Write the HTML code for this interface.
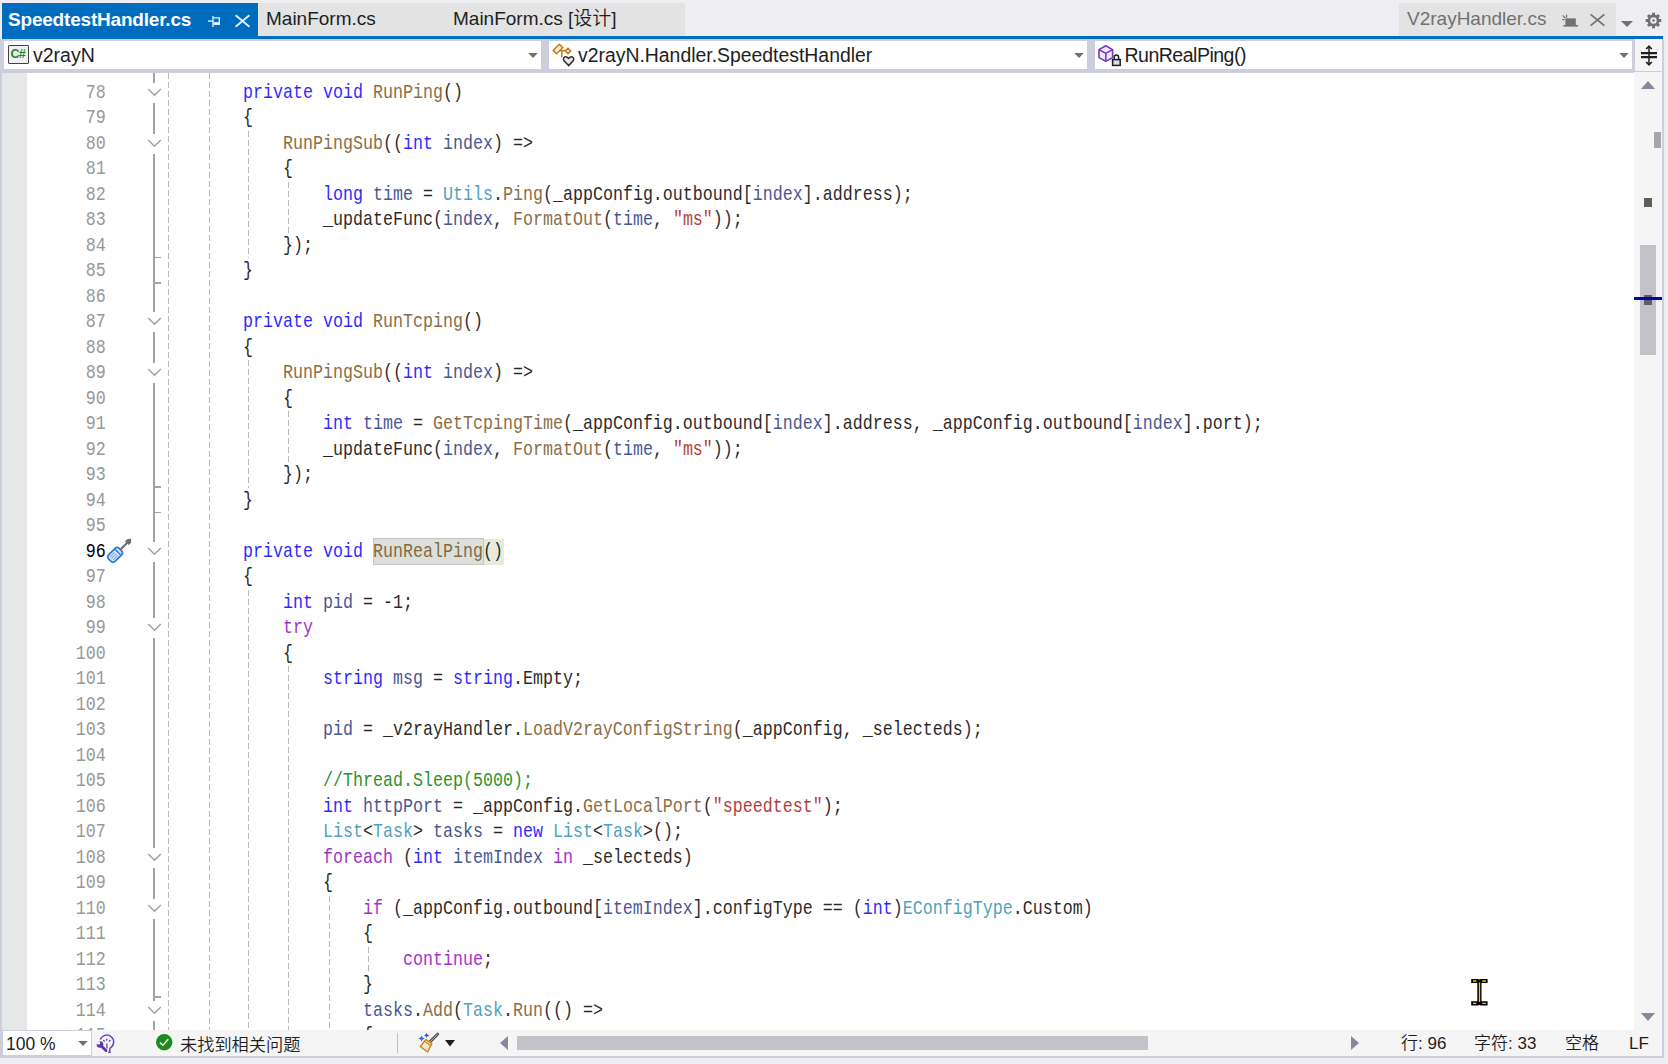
<!DOCTYPE html>
<html lang="zh-CN">
<head>
<meta charset="utf-8">
<title>SpeedtestHandler.cs</title>
<style>
html,body{margin:0;padding:0}
body{width:1668px;height:1064px;overflow:hidden;position:relative;background:#eeeef2;font-family:"Liberation Sans","Noto Sans CJK SC",sans-serif;font-size:19px;color:#1e1e1e}
.a{position:absolute}
.ui{position:absolute;white-space:pre;line-height:24px;height:24px;font-size:19px;color:#1e1e1e}
/* editor */
#edwrap{position:absolute;left:0;top:0;width:1668px;height:1030px;overflow:hidden}
.cl{position:absolute;left:163.3px;height:25.5px;line-height:25.5px;white-space:pre;font-family:"Liberation Mono",monospace;font-size:20.6px;color:#000;transform:scaleX(0.80893);transform-origin:0 0;margin-top:0.2px;box-sizing:border-box}
.ln{position:absolute;left:26px;width:98.65px;text-align:right;height:25.5px;line-height:25.5px;white-space:pre;font-family:"Liberation Mono",monospace;font-size:20.6px;color:#858585;transform:scaleX(0.80893);transform-origin:0 0;margin-top:0.2px;box-sizing:border-box}
.ln.cur{color:#000}
.cl,.ln{opacity:.84}
.ln.cur{opacity:1}
.k{color:#0000ff}.c{color:#8f08c4}.t{color:#2b91af}.m{color:#74531f}.v{color:#1f377f}.s{color:#a31515}.g{color:#008000}
.gd{position:absolute;width:1px;background:repeating-linear-gradient(to bottom,#bababa 0,#bababa 6px,transparent 6px,transparent 9px)}
.ol{position:absolute;left:153.2px;width:1.6px;background:#a3a3a3}
.tk{position:absolute;left:154px;width:7px;height:1.4px;background:#a3a3a3}
.chev{position:absolute;left:146.5px}
</style>
</head>
<body>
<!-- tab strip -->
<div class="a" style="left:2px;top:3px;width:256px;height:34px;background:#006cbe"></div>
<div class="a" style="left:258px;top:3px;width:427px;height:33px;background:#e3e3e4"></div>
<div class="a" style="left:1399px;top:3px;width:217px;height:33px;background:#e3e3e4"></div>
<div class="a" style="left:2px;top:36px;width:1661px;height:3px;background:#006cbe"></div>
<div class="ui" style="left:8px;top:7.5px;font-weight:bold;color:#fff;letter-spacing:-0.2px" id="t1">SpeedtestHandler.cs</div>
<div class="ui" style="left:266px;top:6.5px" id="t2">MainForm.cs</div>
<div class="ui" style="left:453px;top:6.5px;font-weight:350" id="t3">MainForm.cs [设计]</div>
<div class="ui" style="left:1407px;top:6.5px;color:#717171" id="t4">V2rayHandler.cs</div>
<!-- pin -->
<svg class="a" style="left:206px;top:14px" width="16" height="14" viewBox="0 0 16 14"><g fill="none" stroke="#e4f0fb" stroke-width="1.4"><path d="M2 7.1H7"/><path d="M7 2V13"/><path d="M7.7 3.9H13.3V10.3H7.7"/><path d="M7.7 9.3H13.3" stroke-width="2.4"/></g></svg>
<!-- close -->
<svg class="a" style="left:234px;top:14px" width="17" height="14" viewBox="0 0 17 14"><path d="M1.6 1.2L15.4 12.8M15.4 1.2L1.6 12.8" stroke="#e4f0fb" stroke-width="1.8" fill="none"/></svg>
<!-- keep open icon -->
<svg class="a" style="left:1561px;top:14px" width="18" height="14" viewBox="0 0 18 14"><g fill="#717171"><rect x="4.4" y="4.4" width="10.4" height="6.8"/><rect x="2.4" y="11" width="14.6" height="1.6"/></g><path d="M1.6 1.4L4.6 4.2M5.6 0.6V3.6M1.2 5.6H3.6" stroke="#717171" stroke-width="1.2" fill="none"/></svg>
<svg class="a" style="left:1589px;top:13px" width="17" height="14" viewBox="0 0 17 14"><path d="M1.6 1.4L15.4 12.6M15.4 1.4L1.6 12.6" stroke="#717171" stroke-width="1.8" fill="none"/></svg>
<svg class="a" style="left:1620px;top:20px" width="14" height="8" viewBox="0 0 14 8"><path d="M1 1.1H13L7 7z" fill="#717171"/></svg>
<!-- gear -->
<svg class="a" style="left:1645px;top:12px" width="17" height="17" viewBox="0 0 17 17"><g transform="translate(8.5 8.5)"><circle r="4.6" fill="none" stroke="#717171" stroke-width="2.8"/><g fill="#717171"><rect x="-1.5" y="-7.8" width="3" height="3.4"/><rect x="-1.5" y="4.4" width="3" height="3.4"/><rect x="-7.8" y="-1.5" width="3.4" height="3"/><rect x="4.4" y="-1.5" width="3.4" height="3"/><g transform="rotate(45)"><rect x="-1.5" y="-7.8" width="3" height="3.4"/><rect x="-1.5" y="4.4" width="3" height="3.4"/><rect x="-7.8" y="-1.5" width="3.4" height="3"/><rect x="4.4" y="-1.5" width="3.4" height="3"/></g></g><circle r="1.3" fill="#717171"/></g></svg>

<!-- nav bar -->
<div class="a" style="left:0;top:39px;width:1635px;height:34px;background:#cccedb"></div>
<div class="a" style="left:4px;top:41px;width:537px;height:28px;background:#fff"></div>
<div class="a" style="left:549px;top:41px;width:538px;height:28px;background:#fff"></div>
<div class="a" style="left:1095px;top:41px;width:537px;height:28px;background:#fff"></div>
<div class="a" style="left:1635px;top:39px;width:27px;height:32px;background:#f5f5f5"></div>
<div class="a" style="left:1635px;top:71px;width:27px;height:1px;background:#cccedb"></div>
<!-- C# icon -->
<div class="a" style="left:8px;top:45px;width:19px;height:16.5px;border:1.4px solid #424242;background:#f0eff1;border-radius:1px"></div>
<div class="a" style="left:10.5px;top:46px;width:17px;height:16px;line-height:16px;font-size:12.5px;font-weight:bold;color:#1e8a1e;letter-spacing:-0.8px;white-space:pre">C#</div>
<div class="ui" style="left:33px;top:43px;font-size:19.5px" id="n1">v2rayN</div>
<svg class="a" style="left:527px;top:52px" width="12" height="7" viewBox="0 0 12 7"><path d="M1.2 1H10.8L6 6z" fill="#717171"/></svg>
<!-- class icon -->
<svg class="a" style="left:551px;top:42px" width="26" height="26" viewBox="0 0 26 26"><g fill="none" stroke="#c27d1a" stroke-width="1.5"><path d="M2.2 8.4L8.4 2.2L11.8 5.6L5.6 11.8z" fill="#f3ead9"/><path d="M9 8.6H15"/><path d="M10.8 8.6V15.6"/><path d="M17 6.4L19.6 9L17 11.6L14.4 9z" fill="#f3ead9"/></g><path d="M17.6 23.6L13 18.8C11.4 16.6 13.6 13.8 16 15.2L17.6 16.4L19.2 15.2C21.6 13.8 23.8 16.6 22.2 18.8z" fill="#e8e8e8" stroke="#2b2b2b" stroke-width="1.5"/></svg>
<div class="ui" style="left:578px;top:43px;font-size:19.4px" id="n2">v2rayN.Handler.SpeedtestHandler</div>
<svg class="a" style="left:1073px;top:52px" width="12" height="7" viewBox="0 0 12 7"><path d="M1.2 1H10.8L6 6z" fill="#717171"/></svg>
<!-- method icon -->
<svg class="a" style="left:1097px;top:43px" width="26" height="25" viewBox="0 0 26 25"><g fill="#efe8f8" stroke="#7438c2" stroke-width="1.6" stroke-linejoin="round"><path d="M8.8 2.8L15.6 6.6V14.6L8.8 18.4L2 14.6V6.6z"/><path d="M2 6.6L8.8 10.4L15.6 6.6M8.8 10.4V18.4" fill="none"/></g><path d="M17.2 16.4V14.2C17.2 11.2 21.6 11.2 21.6 14.2V16.4" fill="none" stroke="#1e1e1e" stroke-width="1.5"/><rect x="15.6" y="16.6" width="7.6" height="5.8" fill="#e0e0e0" stroke="#1e1e1e" stroke-width="1.5"/></svg>
<div class="ui" style="left:1124.5px;top:43px;font-size:19.5px;letter-spacing:-0.5px" id="n3">RunRealPing()</div>
<svg class="a" style="left:1618px;top:52px" width="12" height="7" viewBox="0 0 12 7"><path d="M1.2 1H10.8L6 6z" fill="#717171"/></svg>
<!-- split button -->
<svg class="a" style="left:1639px;top:44px" width="20" height="23" viewBox="0 0 20 23"><g stroke="#1e1e1e" fill="none"><path d="M2 9.1H18M2 13.1H18" stroke-width="2.3"/><path d="M10 2.2V20.8" stroke-width="1.5"/><path d="M7.2 5L10 2.2L12.8 5M7.2 18L10 20.8L12.8 18" stroke-width="1.6"/></g></svg>

<!-- editor area -->
<div class="a" style="left:0;top:73px;width:2px;height:985px;background:#cccedb"></div>
<div id="edwrap">
<div class="a" style="left:2px;top:73px;width:1632px;height:957px;background:#fff"></div>
<div class="a" style="left:2px;top:73px;width:25.2px;height:957px;background:#e6e7e8"></div>
<!-- highlight -->
<div class="a" style="left:373px;top:538px;width:111px;height:26.5px;background:#dbe0db;box-sizing:border-box;border:1px solid #c4c8c4"></div>
<div class="a" style="left:484px;top:538.5px;width:20px;height:26px;background:#e6ebdc"></div>
<div class="gd" style="left:168px;top:73.0px;height:957.0px"></div>
<div class="gd" style="left:209px;top:73.0px;height:957.0px"></div>
<div class="gd" style="left:248px;top:130.5px;height:127.5px"></div>
<div class="gd" style="left:248px;top:360.0px;height:127.5px"></div>
<div class="gd" style="left:248px;top:589.5px;height:440.5px"></div>
<div class="gd" style="left:288px;top:181.5px;height:51.0px"></div>
<div class="gd" style="left:288px;top:411.0px;height:51.0px"></div>
<div class="gd" style="left:288px;top:666.0px;height:364.0px"></div>
<div class="gd" style="left:329px;top:895.5px;height:134.5px"></div>
<div class="gd" style="left:368px;top:946.5px;height:25.5px"></div>
<div class="ol" style="top:73.0px;height:9.5px"></div>
<div class="ol" style="top:102.5px;height:31.0px"></div>
<div class="ol" style="top:153.5px;height:158.5px"></div>
<div class="ol" style="top:332.0px;height:31.0px"></div>
<div class="ol" style="top:383.0px;height:158.5px"></div>
<div class="ol" style="top:561.5px;height:56.5px"></div>
<div class="ol" style="top:638.0px;height:209.5px"></div>
<div class="ol" style="top:867.5px;height:31.0px"></div>
<div class="ol" style="top:918.5px;height:82.0px"></div>
<div class="ol" style="top:1020.5px;height:9.5px"></div>
<svg class="chev" style="top:87.7px" width="15" height="9" viewBox="0 0 15 9"><path d="M1.2 1 L7.5 7.3 L13.8 1" fill="none" stroke="#a0a0a0" stroke-width="1.4"/></svg>
<svg class="chev" style="top:138.7px" width="15" height="9" viewBox="0 0 15 9"><path d="M1.2 1 L7.5 7.3 L13.8 1" fill="none" stroke="#a0a0a0" stroke-width="1.4"/></svg>
<svg class="chev" style="top:317.2px" width="15" height="9" viewBox="0 0 15 9"><path d="M1.2 1 L7.5 7.3 L13.8 1" fill="none" stroke="#a0a0a0" stroke-width="1.4"/></svg>
<svg class="chev" style="top:368.2px" width="15" height="9" viewBox="0 0 15 9"><path d="M1.2 1 L7.5 7.3 L13.8 1" fill="none" stroke="#a0a0a0" stroke-width="1.4"/></svg>
<svg class="chev" style="top:546.7px" width="15" height="9" viewBox="0 0 15 9"><path d="M1.2 1 L7.5 7.3 L13.8 1" fill="none" stroke="#a0a0a0" stroke-width="1.4"/></svg>
<svg class="chev" style="top:623.2px" width="15" height="9" viewBox="0 0 15 9"><path d="M1.2 1 L7.5 7.3 L13.8 1" fill="none" stroke="#a0a0a0" stroke-width="1.4"/></svg>
<svg class="chev" style="top:852.7px" width="15" height="9" viewBox="0 0 15 9"><path d="M1.2 1 L7.5 7.3 L13.8 1" fill="none" stroke="#a0a0a0" stroke-width="1.4"/></svg>
<svg class="chev" style="top:903.7px" width="15" height="9" viewBox="0 0 15 9"><path d="M1.2 1 L7.5 7.3 L13.8 1" fill="none" stroke="#a0a0a0" stroke-width="1.4"/></svg>
<svg class="chev" style="top:1005.7px" width="15" height="9" viewBox="0 0 15 9"><path d="M1.2 1 L7.5 7.3 L13.8 1" fill="none" stroke="#a0a0a0" stroke-width="1.4"/></svg>
<div class="tk" style="top:256.7px"></div>
<div class="tk" style="top:282.2px"></div>
<div class="tk" style="top:486.2px"></div>
<div class="tk" style="top:511.7px"></div>
<div class="tk" style="top:996.2px"></div>
<div class="ln" style="top:79.5px">78</div>
<div class="cl" style="top:79.5px">        <span class="k">private</span> <span class="k">void</span> <span class="m">RunPing</span>()</div>
<div class="ln" style="top:105.0px">79</div>
<div class="cl" style="top:105.0px">        {</div>
<div class="ln" style="top:130.5px">80</div>
<div class="cl" style="top:130.5px">            <span class="m">RunPingSub</span>((<span class="k">int</span> <span class="v">index</span>) =&gt;</div>
<div class="ln" style="top:156.0px">81</div>
<div class="cl" style="top:156.0px">            {</div>
<div class="ln" style="top:181.5px">82</div>
<div class="cl" style="top:181.5px">                <span class="k">long</span> <span class="v">time</span> = <span class="t">Utils</span>.<span class="m">Ping</span>(_appConfig.outbound[<span class="v">index</span>].address);</div>
<div class="ln" style="top:207.0px">83</div>
<div class="cl" style="top:207.0px">                _updateFunc(<span class="v">index</span>, <span class="m">FormatOut</span>(<span class="v">time</span>, <span class="s">"ms"</span>));</div>
<div class="ln" style="top:232.5px">84</div>
<div class="cl" style="top:232.5px">            });</div>
<div class="ln" style="top:258.0px">85</div>
<div class="cl" style="top:258.0px">        }</div>
<div class="ln" style="top:283.5px">86</div>
<div class="ln" style="top:309.0px">87</div>
<div class="cl" style="top:309.0px">        <span class="k">private</span> <span class="k">void</span> <span class="m">RunTcping</span>()</div>
<div class="ln" style="top:334.5px">88</div>
<div class="cl" style="top:334.5px">        {</div>
<div class="ln" style="top:360.0px">89</div>
<div class="cl" style="top:360.0px">            <span class="m">RunPingSub</span>((<span class="k">int</span> <span class="v">index</span>) =&gt;</div>
<div class="ln" style="top:385.5px">90</div>
<div class="cl" style="top:385.5px">            {</div>
<div class="ln" style="top:411.0px">91</div>
<div class="cl" style="top:411.0px">                <span class="k">int</span> <span class="v">time</span> = <span class="m">GetTcpingTime</span>(_appConfig.outbound[<span class="v">index</span>].address, _appConfig.outbound[<span class="v">index</span>].port);</div>
<div class="ln" style="top:436.5px">92</div>
<div class="cl" style="top:436.5px">                _updateFunc(<span class="v">index</span>, <span class="m">FormatOut</span>(<span class="v">time</span>, <span class="s">"ms"</span>));</div>
<div class="ln" style="top:462.0px">93</div>
<div class="cl" style="top:462.0px">            });</div>
<div class="ln" style="top:487.5px">94</div>
<div class="cl" style="top:487.5px">        }</div>
<div class="ln" style="top:513.0px">95</div>
<div class="ln cur" style="top:538.5px">96</div>
<div class="cl" style="top:538.5px">        <span class="k">private</span> <span class="k">void</span> <span class="m">RunRealPing</span>()</div>
<div class="ln" style="top:564.0px">97</div>
<div class="cl" style="top:564.0px">        {</div>
<div class="ln" style="top:589.5px">98</div>
<div class="cl" style="top:589.5px">            <span class="k">int</span> <span class="v">pid</span> = -1;</div>
<div class="ln" style="top:615.0px">99</div>
<div class="cl" style="top:615.0px">            <span class="c">try</span></div>
<div class="ln" style="top:640.5px">100</div>
<div class="cl" style="top:640.5px">            {</div>
<div class="ln" style="top:666.0px">101</div>
<div class="cl" style="top:666.0px">                <span class="k">string</span> <span class="v">msg</span> = <span class="k">string</span>.Empty;</div>
<div class="ln" style="top:691.5px">102</div>
<div class="ln" style="top:717.0px">103</div>
<div class="cl" style="top:717.0px">                <span class="v">pid</span> = _v2rayHandler.<span class="m">LoadV2rayConfigString</span>(_appConfig, _selecteds);</div>
<div class="ln" style="top:742.5px">104</div>
<div class="ln" style="top:768.0px">105</div>
<div class="cl" style="top:768.0px">                <span class="g">//Thread.Sleep(5000);</span></div>
<div class="ln" style="top:793.5px">106</div>
<div class="cl" style="top:793.5px">                <span class="k">int</span> <span class="v">httpPort</span> = _appConfig.<span class="m">GetLocalPort</span>(<span class="s">"speedtest"</span>);</div>
<div class="ln" style="top:819.0px">107</div>
<div class="cl" style="top:819.0px">                <span class="t">List</span>&lt;<span class="t">Task</span>&gt; <span class="v">tasks</span> = <span class="k">new</span> <span class="t">List</span>&lt;<span class="t">Task</span>&gt;();</div>
<div class="ln" style="top:844.5px">108</div>
<div class="cl" style="top:844.5px">                <span class="c">foreach</span> (<span class="k">int</span> <span class="v">itemIndex</span> <span class="c">in</span> _selecteds)</div>
<div class="ln" style="top:870.0px">109</div>
<div class="cl" style="top:870.0px">                {</div>
<div class="ln" style="top:895.5px">110</div>
<div class="cl" style="top:895.5px">                    <span class="c">if</span> (_appConfig.outbound[<span class="v">itemIndex</span>].configType == (<span class="k">int</span>)<span class="t">EConfigType</span>.Custom)</div>
<div class="ln" style="top:921.0px">111</div>
<div class="cl" style="top:921.0px">                    {</div>
<div class="ln" style="top:946.5px">112</div>
<div class="cl" style="top:946.5px">                        <span class="c">continue</span>;</div>
<div class="ln" style="top:972.0px">113</div>
<div class="cl" style="top:972.0px">                    }</div>
<div class="ln" style="top:997.5px">114</div>
<div class="cl" style="top:997.5px">                    <span class="v">tasks</span>.<span class="m">Add</span>(<span class="t">Task</span>.<span class="m">Run</span>(() =&gt;</div>
<div class="ln" style="top:1023.0px">115</div>
<div class="cl" style="top:1023.0px">                    {</div>
<!-- screwdriver -->
<svg class="a" style="left:100px;top:530px" width="40" height="40" viewBox="0 0 40 40"><g transform="translate(19 21) rotate(-45) translate(-17 0)"><rect x="4" y="-4.6" width="15" height="9.2" rx="3.2" fill="#d6e6f7" stroke="#2b7cd3" stroke-width="1.7"/><path d="M15.4 -4.2V4.2" stroke="#2b7cd3" stroke-width="1.4" fill="none"/><path d="M6.6 -2.2H13M6.6 0H13M6.6 2.2H13" stroke="#7fb0e6" stroke-width="1" fill="none"/><rect x="19.6" y="-1.1" width="9" height="2.2" fill="#717171"/><path d="M28 -2.6H31.4L34.2 0L31.4 2.6H28z" fill="#717171"/></g></svg>
<!-- mouse cursor -->
<svg class="a" style="left:1470px;top:977px" width="19" height="30" viewBox="0 0 19 30"><path d="M1.2 4H7.6L9.4 5L11.2 4H17.6M1.2 26.4H7.6L9.4 25.6L11.2 26.4H17.6M9.4 5V25.6" stroke="#000" stroke-width="4.2" fill="none"/><path d="M3 4H6.4M12.4 4H15.8M3 26.4H6.4M12.4 26.4H15.8M9.5 5.4V25" stroke="#ffc800" stroke-width="1.3" fill="none"/></svg>
</div>

<!-- vertical scrollbar -->
<div class="a" style="left:1634px;top:72px;width:28px;height:958px;background:#f5f5f5"></div>
<div class="a" style="left:1662px;top:39px;width:2px;height:1019px;background:#cccedb"></div>
<svg class="a" style="left:1640px;top:80px" width="16" height="10" viewBox="0 0 16 10"><path d="M8 1L15 9H1z" fill="#868999"/></svg>
<svg class="a" style="left:1640px;top:1012px" width="16" height="10" viewBox="0 0 16 10"><path d="M1 1H15L8 9z" fill="#868999"/></svg>
<div class="a" style="left:1654px;top:132px;width:7px;height:16px;background:#a6a6a6"></div>
<div class="a" style="left:1644px;top:198px;width:8px;height:9px;background:#605e5c"></div>
<div class="a" style="left:1640px;top:245px;width:16px;height:110px;background:#c2c3c9"></div>
<div class="a" style="left:1644px;top:295px;width:8px;height:9.5px;background:#605e5c"></div>
<div class="a" style="left:1634px;top:297px;width:28px;height:3px;background:#0000c0"></div>

<!-- bottom bar -->
<div class="a" style="left:2px;top:1030px;width:1660px;height:26px;background:#f5f5f5"></div>
<div class="a" style="left:0;top:1056px;width:1664px;height:2px;background:#cccedb"></div>
<div class="a" style="left:2px;top:1030px;width:90px;height:26px;background:#cccedb"></div>
<div class="a" style="left:3px;top:1031px;width:88px;height:24px;background:#fff"></div>
<div class="ui" style="left:6px;top:1032px;font-size:17.5px" id="b1">100 %</div>
<svg class="a" style="left:77px;top:1040px" width="12" height="7" viewBox="0 0 12 7"><path d="M1.2 1H10.8L6 6z" fill="#717171"/></svg>
<!-- lightbulb wrench -->
<svg class="a" style="left:96px;top:1033px" width="20" height="21" viewBox="0 0 20 21"><g fill="none" stroke="#6b3fbf"><path d="M4.3 6.6A6.9 6.9 0 1 1 14.4 14.9L13.8 16V19.3H12.2" stroke-width="1.5"/><path d="M10.9 10.4V15.6" stroke-width="1.3"/><path d="M7.2 7.2L8.8 8.6M10.7 5.8V7.7M14.5 7.2L12.9 8.6" stroke-width="1.3"/></g><circle cx="4" cy="11.5" r="3.3" fill="#5f35b5"/><path d="M4.6 12.2L9.9 17.5" stroke="#5f35b5" stroke-width="2.9" stroke-linecap="round"/><circle cx="2.5" cy="9.9" r="1.7" fill="#f5f5f5"/></svg>
<!-- green check -->
<svg class="a" style="left:155px;top:1033px" width="18" height="18" viewBox="0 0 18 18"><circle cx="9.2" cy="9.2" r="8.2" fill="#1f8a1f"/><path d="M4.9 9.5L7.9 12.2L13.3 6.3" stroke="#f4fbf4" stroke-width="1.35" fill="none"/></svg>
<div class="ui" style="left:180px;top:1032.5px;font-size:17.2px;font-weight:350" id="b2">未找到相关问题</div>
<div class="a" style="left:397px;top:1033px;width:1px;height:20px;background:#b9c0d6"></div>
<!-- broom -->
<svg class="a" style="left:418px;top:1032px" width="24" height="22" viewBox="0 0 24 22"><path d="M12.4 9.4L19.6 2.2" stroke="#4a4a4a" stroke-width="3" stroke-linecap="round"/><path d="M12.4 9.4L19.6 2.2" stroke="#d0d0d0" stroke-width="0.9" stroke-linecap="round"/><path d="M8 7.6L13.8 11.6L9.6 20L2.2 14.4z" fill="#f1e6cf" stroke="#c88a1e" stroke-width="1.5" stroke-linejoin="round"/><path d="M7 9.6L12.4 13.4" stroke="#c88a1e" stroke-width="1.2"/><path d="M3.6 3.4L4.6 5.6L6.8 6.6L4.6 7.6L3.6 9.8L2.6 7.6L0.4 6.6L2.6 5.6z" fill="#1e6fe0"/><path d="M8.6 0.8L9.4 2.6L11.2 3.4L9.4 4.2L8.6 6L7.8 4.2L6 3.4L7.8 2.6z" fill="#4a3fc8"/></svg>
<svg class="a" style="left:444px;top:1039px" width="12" height="8" viewBox="0 0 12 8"><path d="M1 1H11L6 7.4z" fill="#1e1e1e"/></svg>
<!-- h scrollbar -->
<svg class="a" style="left:499px;top:1035px" width="10" height="16" viewBox="0 0 10 16"><path d="M9 1V15L1 8z" fill="#868999"/></svg>
<div class="a" style="left:517px;top:1036px;width:631px;height:14px;background:#c2c3c9"></div>
<svg class="a" style="left:1350px;top:1035px" width="10" height="16" viewBox="0 0 10 16"><path d="M1 1V15L9 8z" fill="#868999"/></svg>
<div class="ui" style="left:1401px;top:1032px;font-size:17px;font-weight:350" id="b3">行: 96</div>
<div class="ui" style="left:1474px;top:1032px;font-size:17px;font-weight:350" id="b4">字符: 33</div>
<div class="ui" style="left:1565px;top:1032px;font-size:17px;font-weight:350" id="b5">空格</div>
<div class="ui" style="left:1629px;top:1032px;font-size:17px" id="b6">LF</div>
</body>
</html>
